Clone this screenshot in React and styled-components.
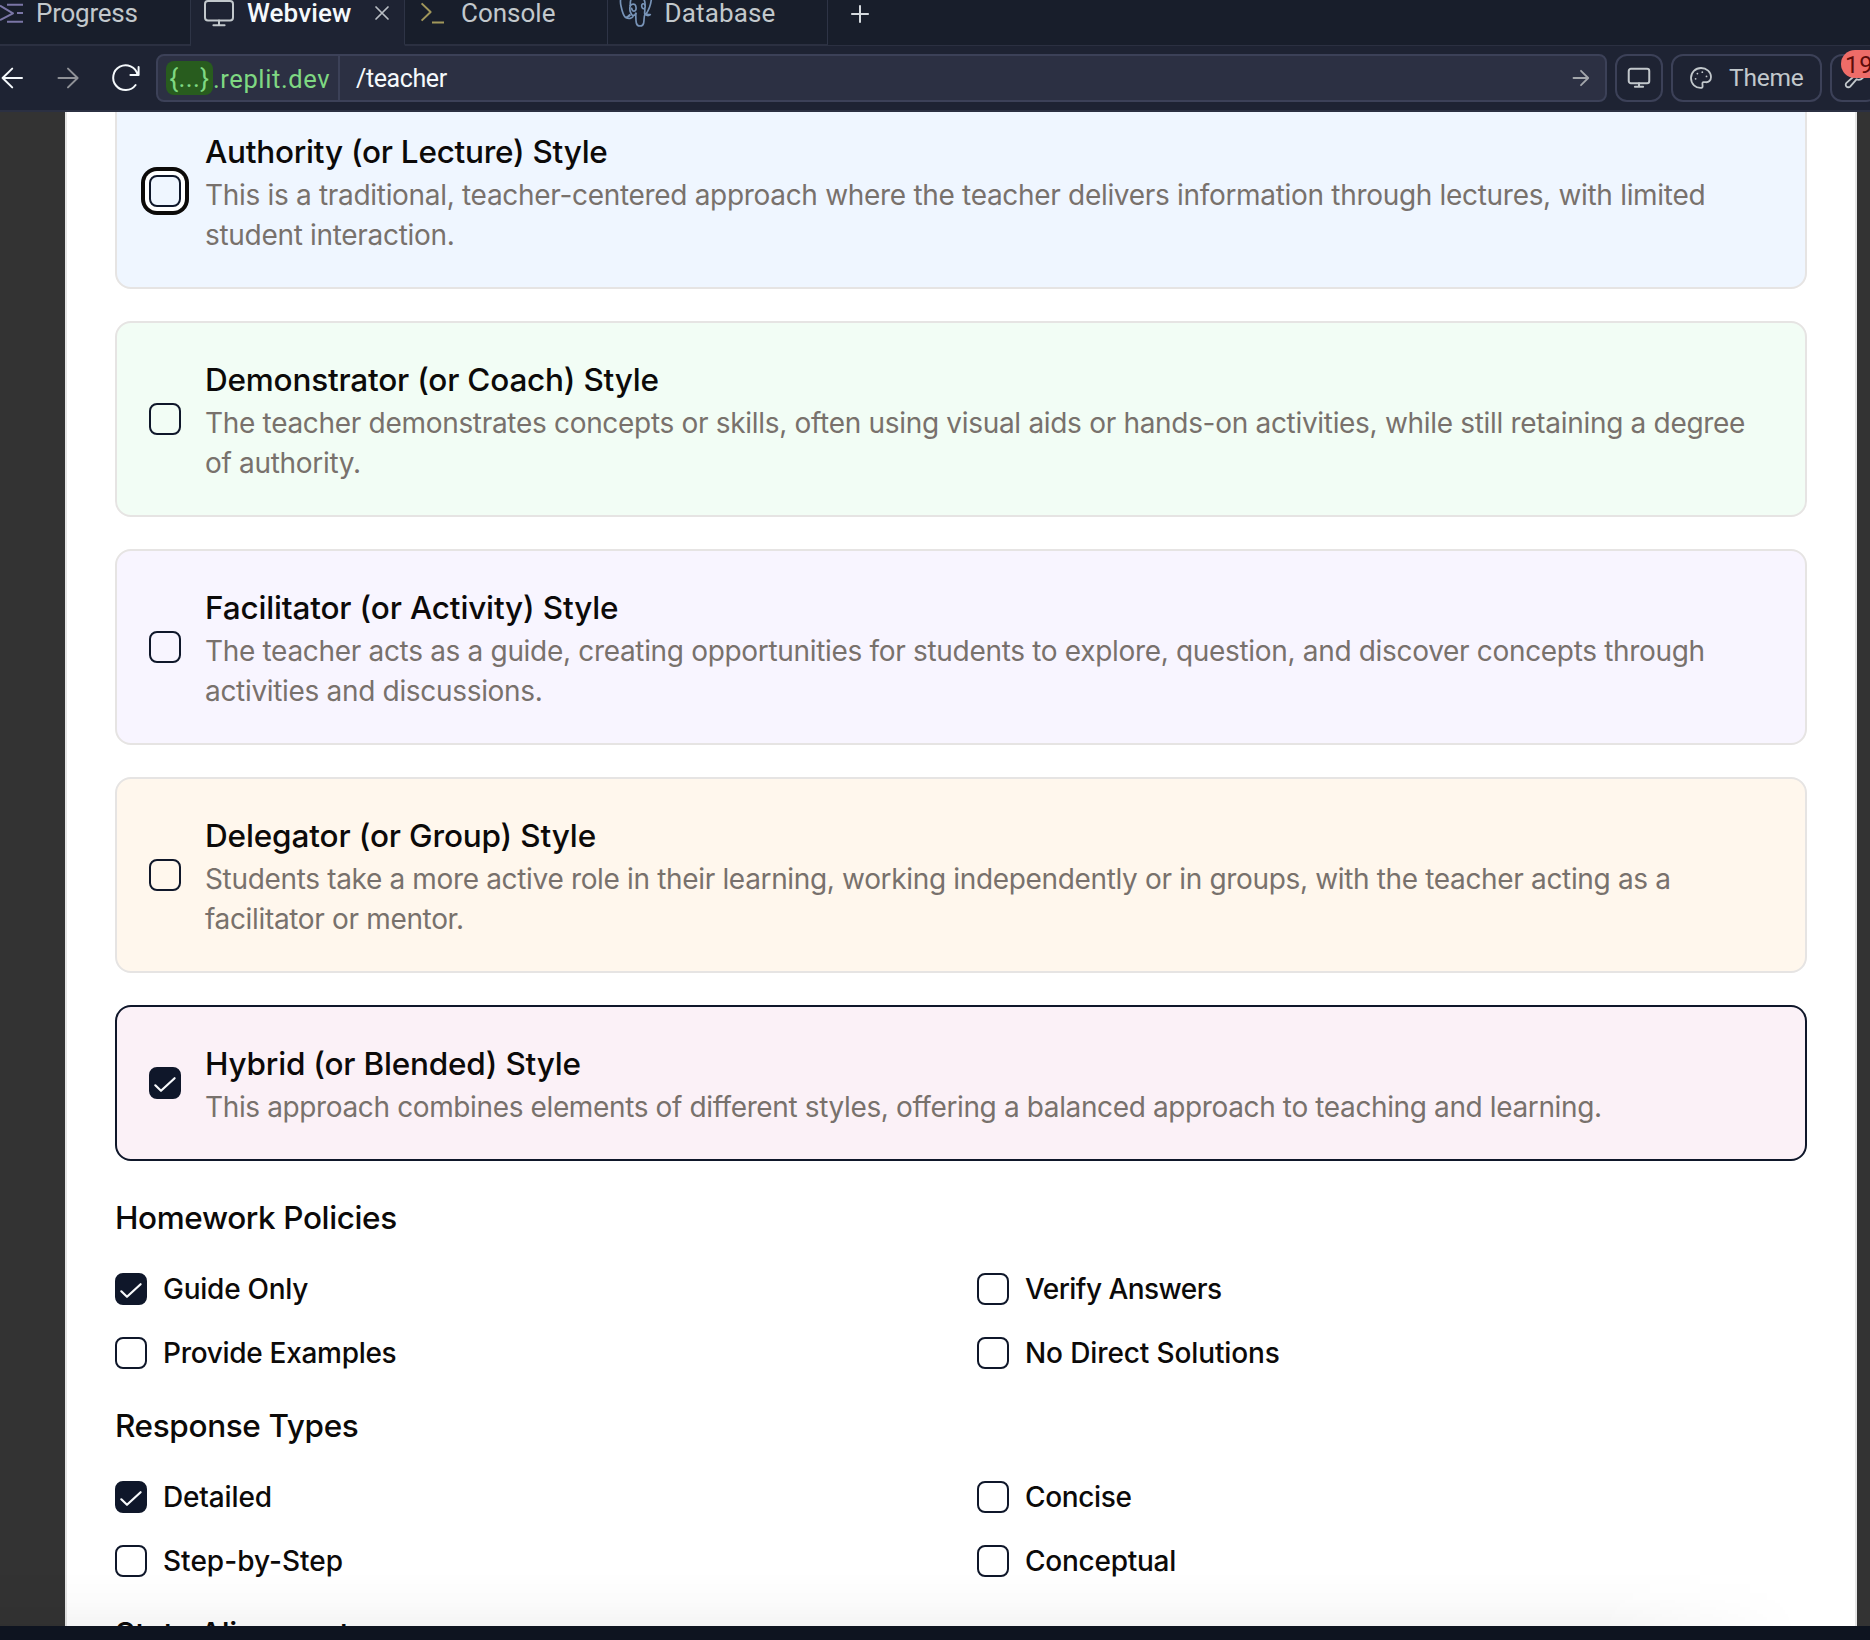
import React, { useState } from 'react';
import styled, { createGlobalStyle, css } from 'styled-components';

const GlobalStyle = createGlobalStyle`
  *, *::before, *::after { box-sizing: border-box; }
  html, body { margin: 0; padding: 0; }
  body { overflow: hidden; background: #0e1420; }
`;

const Screen = styled.div`
  display: flex;
  flex-direction: column;
  width: 1870px;
  height: 1640px;
  overflow: hidden;
  background: #0e1420;
  font-family: Roboto, 'Liberation Sans', sans-serif;
`;

const Icon = styled.svg`
  display: block;
  flex: none;
  overflow: visible;
  fill: none;
  stroke: currentColor;
  stroke-width: ${(p) => p.$weight || 2};
  stroke-linecap: ${(p) => (p.$square ? 'butt' : 'round')};
  stroke-linejoin: round;
`;

/* ---------- tab strip ---------- */

const TabStrip = styled.div`
  display: flex;
  flex: none;
  height: 46px;
  background: #181e2b;
`;

const Tab = styled.div`
  display: flex;
  align-items: center;
  flex: none;
  width: ${(p) => p.$width}px;
  height: 46px;
  padding: 0 0 18px ${(p) => p.$inset}px;
  gap: ${(p) => p.$gap}px;
  border-right: 1px solid #2e3446;
  border-bottom: 2px solid ${(p) => (p.$active ? '#1e2333' : '#2b3041')};
  background: ${(p) => (p.$active ? '#1e2333' : '#181e2b')};
`;

const TabLabel = styled.span`
  font-size: 26px;
  line-height: 26px;
  font-weight: ${(p) => (p.$active ? 500 : 400)};
  letter-spacing: ${(p) => p.$spacing || 0}px;
  color: ${(p) => (p.$active ? '#f5f9fc' : '#c2c8cc')};
  white-space: nowrap;
`;

const TabIcon = styled.span`
  display: flex;
  color: ${(p) => p.$color};
`;

const CloseSlot = styled.span`
  display: flex;
  margin-left: 10px;
  color: #b9bec4;
`;

const StripTail = styled.div`
  display: flex;
  align-items: center;
  flex: 1;
  height: 46px;
  padding: 0 0 18px 22px;
  border-bottom: 1px solid #2b3041;
  color: #d5dade;
`;

/* ---------- address bar ---------- */

const AddressRow = styled.div`
  display: flex;
  align-items: center;
  flex: none;
  gap: 8px;
  height: 66px;
  border-bottom: 2px solid #2b3042;
  background: #1e2333;
`;

const HistoryGroup = styled.div`
  display: flex;
  align-items: center;
  gap: 31px;
  margin-right: 7px;
`;

const NavButton = styled.span`
  display: flex;
  color: ${(p) => (p.$dim ? '#8f9197' : '#f5f9fc')};

  &:last-child {
    margin-left: -1px;
  }
`;

const AddressBox = styled.div`
  display: flex;
  align-items: center;
  flex: 1;
  height: 48px;
  padding-left: 8px;
  border: 2px solid #3c4158;
  border-radius: 8px;
  background: #2c3043;
`;

const HostChip = styled.span`
  display: flex;
  align-items: center;
  justify-content: center;
  width: 47px;
  height: 34px;
  border-radius: 8px;
  background: #285c1e;
  color: #7fd882;
  font-size: 26px;
  line-height: 34px;
  letter-spacing: 0.4px;
`;

const Host = styled.span`
  display: flex;
  align-items: center;
  width: 125px;
  height: 44px;
  padding-top: 1px;
  color: #7fd882;
  font-size: 25.5px;
  letter-spacing: 0.6px;
`;

const Path = styled.span`
  display: flex;
  align-items: center;
  flex: 1;
  height: 44px;
  padding: 1px 0 0 16px;
  border-left: 2px solid #3c4158;
  color: #f5f9fc;
  font-size: 25px;
  letter-spacing: -0.4px;
`;

const GoSlot = styled.span`
  display: flex;
  padding-right: 16px;
  color: #a3a6ab;
`;

const BarButton = styled.div`
  display: flex;
  align-items: center;
  flex: none;
  width: ${(p) => p.$width}px;
  height: 48px;
  padding-left: ${(p) => p.$inset}px;
  gap: 17px;
  border: 2px solid #3c4158;
  border-radius: 12px;
  color: #c2c8cc;
  font-size: 24.5px;
  letter-spacing: -0.2px;
  ${(p) =>
    p.$bleed &&
    css`
      position: relative;
      margin-right: -8px;
    `}
`;

const ThemeLabel = styled.span`
  line-height: 30px;
`;

const Badge = styled.span`
  position: absolute;
  top: -6px;
  left: 9px;
  display: flex;
  align-items: center;
  width: 42px;
  height: 28px;
  padding: 1px 0 0 4px;
  border-radius: 14px;
  background: #ee6c68;
  color: #5e0c0a;
  font-size: 24px;
  letter-spacing: 0.8px;
`;

/* ---------- page ---------- */

const Viewport = styled.div`
  position: relative;
  display: flex;
  flex: none;
  height: 1514px;
  overflow: hidden;
  background: #333333;
  font-family: Inter, 'Liberation Sans', sans-serif;
`;

const Panel = styled.main`
  flex: none;
  width: 1792px;
  height: 1700px;
  margin: -19px 0 0 65px;
  padding: 0 48px;
  border: 0 solid #e5e5e5;
  border-width: 0 2px;
  background: #ffffff;
`;

const Stack = styled.div`
  display: flex;
  flex-direction: column;
  gap: 32px;
`;

const StyleCard = styled.label`
  display: flex;
  align-items: center;
  gap: 24px;
  padding: 32px;
  border: 2px solid ${(p) => (p.$selected ? '#0f172a' : '#e6e4e3')};
  border-radius: 16px;
  background: ${(p) => p.$tint};
`;

const CardText = styled.div`
  flex: 1;
`;

const Title = styled.div`
  margin-bottom: -2px;
  font-size: 31.5px;
  line-height: 50px;
  font-weight: 500;
  letter-spacing: ${(p) => p.$spacing}px;
  color: #0c0a09;
`;

const Description = styled.div`
  font-size: 28px;
  line-height: 40px;
  letter-spacing: ${(p) => p.$spacing ?? -0.31}px;
  color: #78716c;
`;

const Box = styled.span`
  display: flex;
  flex: none;
  width: 32px;
  height: 32px;
  border: 2px solid #0f172a;
  border-radius: 8px;
  background: ${(p) => (p.$checked ? '#0f172a' : 'transparent')};
  color: #f8fafc;
  ${(p) =>
    p.$focused &&
    css`
      background: #eff6ff;
      box-shadow: 0 0 0 4px #ffffff, 0 0 0 8px #0c0a09;
    `}
`;

const Options = styled.div`
  display: grid;
  grid-template-columns: 1fr 1fr;
  gap: 32px;
`;

const Option = styled.label`
  display: flex;
  align-items: center;
  gap: 16px;
  height: 32px;
`;

const OptionLabel = styled.span`
  font-size: 28px;
  line-height: 28px;
  font-weight: 500;
  letter-spacing: ${(p) => p.$spacing}px;
  color: #0c0a09;
`;

const BottomShade = styled.div`
  position: absolute;
  left: 0;
  right: 0;
  bottom: 0;
  height: 56px;
  pointer-events: none;
  background: linear-gradient(to bottom, rgba(0, 0, 0, 0) 0%, rgba(0, 0, 0, 0.012) 50%, rgba(0, 0, 0, 0.045) 100%);
  mask-image: linear-gradient(to right, #000 0, #000 1600px, transparent 1800px);
`;

function Checkbox({ checked, focused }) {
  return (
    <Box $checked={checked} $focused={focused}>
      {checked && (
        <Icon width="28" height="28" viewBox="2 2 28 28" $weight={2.2}>
          <path d="M6.3 18.3 12 23.8 25.6 11.2" />
        </Icon>
      )}
    </Box>
  );
}

function Monitor({ width, height }) {
  return (
    <Icon width={width} height={height} viewBox="0 0 30 27" $weight={(2 * 30) / width}>
      <rect x="1" y="1" width="28" height="19.5" rx="3" />
      <path d="M15 20.5v4.8M9.4 25.3h11.2" />
    </Icon>
  );
}

function ProgressIcon() {
  return (
    <Icon width="24" height="26" viewBox="0 0 24 26" $square>
      <path d="M7 4.7h16M17 13h6M7 21.7h16M0 5.6 13 13.3 0 20" />
    </Icon>
  );
}

function ConsoleIcon() {
  return (
    <Icon width="24" height="26" viewBox="0 0 24 26" $square>
      <path d="M1.6 3.4 10.6 12 1.6 20.6M12 22.5h12" />
    </Icon>
  );
}

function PostgresIcon() {
  return (
    <Icon width="36" height="32" viewBox="24 -3 108 96" $weight={5}>
      <path d="M44-10C31-6 30 10 33 24c3 14 6 28 13 34 5 3 9-1 14-6" />
      <path d="M59 50c-4 5-6 8-11 9 8 5 18 2 21-3" />
      <path d="M61 22c-1-14 3-24 12-25h14c12 0 19 9 18 24" />
      <path d="M61 22c-3 10-2 20 5 29 5 3 10 0 12-5" />
      <path d="M61 23c4-6 14-6 16 0 2 7 1 14-3 16-5 1-8-2-9-8" />
      <path d="M100-9c18-3 26 3 24 14-2 16-8 32-16 43" />
      <path d="M105 21c-4-6-10-4-10 2 0 6 3 10 7 9 4-2 4-7 3-11Z" />
      <path d="M104 32c2 5-1 9 0 15 5 7 12 7 17 3-6 0-9-1-13-3" />
      <path d="M77 46c1 10 0 20 2 29 2 12 20 12 22 0 2-9 0-19 4-27" />
    </Icon>
  );
}

const STYLES = [
  {
    title: 'Authority (or Lecture) Style',
    text: 'This is a traditional, teacher-centered approach where the teacher delivers information through lectures, with limited student interaction.',
    tint: '#eff6ff',
    spacing: -0.25,
    focused: true,
  },
  {
    title: 'Demonstrator (or Coach) Style',
    text: 'The teacher demonstrates concepts or skills, often using visual aids or hands-on activities, while still retaining a degree of authority.',
    tint: '#f2fdf5',
    spacing: -0.2,
  },
  {
    title: 'Facilitator (or Activity) Style',
    text: 'The teacher acts as a guide, creating opportunities for students to explore, question, and discover concepts through activities and discussions.',
    tint: '#f8f5ff',
    spacing: -0.16,
    textSpacing: -0.32,
  },
  {
    title: 'Delegator (or Group) Style',
    text: 'Students take a more active role in their learning, working independently or in groups, with the teacher acting as a facilitator or mentor.',
    tint: '#fff7ed',
    spacing: -0.14,
    textSpacing: -0.34,
  },
  {
    title: 'Hybrid (or Blended) Style',
    text: 'This approach combines elements of different styles, offering a balanced approach to teaching and learning.',
    tint: '#fbf1f7',
    spacing: -0.2,
    textSpacing: -0.373,
    selected: true,
  },
];

const GROUPS = [
  {
    title: 'Homework Policies',
    spacing: -0.38,
    options: [
      { label: 'Guide Only', spacing: -0.25, on: true },
      { label: 'Verify Answers', spacing: -0.54 },
      { label: 'Provide Examples', spacing: -0.3 },
      { label: 'No Direct Solutions', spacing: -0.12 },
    ],
  },
  {
    title: 'Response Types',
    spacing: -0.36,
    options: [
      { label: 'Detailed', spacing: -0.15, on: true },
      { label: 'Concise', spacing: -0.35 },
      { label: 'Step-by-Step', spacing: 0.02 },
      { label: 'Conceptual', spacing: -0.25 },
    ],
  },
];

function OptionGroup({ group }) {
  const [on, setOn] = useState(() => group.options.map((o) => !!o.on));
  const toggle = (i) => setOn((v) => v.map((x, j) => (j === i ? !x : x)));
  return (
    <>
      <Title $spacing={group.spacing}>{group.title}</Title>
      <Options>
        {group.options.map((o, i) => (
          <Option key={o.label} onClick={() => toggle(i)}>
            <Checkbox checked={on[i]} />
            <OptionLabel $spacing={o.spacing}>{o.label}</OptionLabel>
          </Option>
        ))}
      </Options>
    </>
  );
}

export default function App() {
  return (
    <Screen>
      <GlobalStyle />
      <TabStrip>
        <Tab $width={191} $inset={0} $gap={12}>
          <TabIcon $color="#7a76a6"><ProgressIcon /></TabIcon>
          <TabLabel $spacing={-0.24}>Progress</TabLabel>
        </Tab>
        <Tab $active $width={214} $inset={13} $gap={13}>
          <TabIcon $color="#c2c8cc"><Monitor width={30} height={27} /></TabIcon>
          <TabLabel $active $spacing={0.1}>Webview</TabLabel>
          <CloseSlot>
            <Icon width="16" height="16" viewBox="0 0 16 16" $weight={1.7}>
              <path d="M2 2 14 14M14 2 2 14" />
            </Icon>
          </CloseSlot>
        </Tab>
        <Tab $width={203} $inset={15} $gap={17}>
          <TabIcon $color="#a1975b"><ConsoleIcon /></TabIcon>
          <TabLabel>Console</TabLabel>
        </Tab>
        <Tab $width={220} $inset={10} $gap={10.5}>
          <TabIcon $color="#7894b8"><PostgresIcon /></TabIcon>
          <TabLabel $spacing={0.14}>Database</TabLabel>
        </Tab>
        <StripTail>
          <Icon width="20" height="20" viewBox="0 0 20 20" $square>
            <path d="M10 1.2v17.6M1.2 10h17.6" />
          </Icon>
        </StripTail>
      </TabStrip>

      <AddressRow>
        <HistoryGroup>
          <NavButton>
            <Icon width="24" height="24" viewBox="0 0 24 24">
              <path d="M22 12H2.6M12.2 2.6 2.6 12l9.6 9.4" />
            </Icon>
          </NavButton>
          <NavButton $dim>
            <Icon width="24" height="24" viewBox="0 0 24 24">
              <path d="M3.5 12h19M13 2.6 22.6 12 13 21.4" />
            </Icon>
          </NavButton>
          <NavButton>
            <Icon width="32" height="28" viewBox="0 0 32 28">
              <path d="M29.6 3v8h-8.2M28.6 10.6A12.4 12.4 0 1 0 26.6 21" />
            </Icon>
          </NavButton>
        </HistoryGroup>
        <AddressBox>
          <HostChip>{'{...}'}</HostChip>
          <Host>.replit.dev</Host>
          <Path>/teacher</Path>
          <GoSlot>
            <Icon width="17" height="18" viewBox="0 0 17 18" $weight={1.8}>
              <path d="M1.5 9h14.6M9 1.8 16.2 9 9 16.2" />
            </Icon>
          </GoSlot>
        </AddressBox>
        <BarButton $width={48} $inset={11}>
          <Monitor width={22} height={20} />
        </BarButton>
        <BarButton $width={151} $inset={17}>
          <Icon width="22" height="22" viewBox="0 0 22 22" $weight={1.8}>
            <path d="M11.6 20.8C5.4 21.4 1 16.8 1 11 1 5.4 5.4 1 11 1s10 4 10 9c0 3.4-2.4 5.6-5.4 5.2-2-.2-3.2-.2-3.2 1.4 0 1.4 1 3.6-.8 4.2Z" />
            <path d="M5.6 11.8h.02M7.4 6.6h.02M12.3 5.2h.02M16.5 9.4h.02" />
          </Icon>
          <ThemeLabel>Theme</ThemeLabel>
        </BarButton>
        <BarButton $bleed $width={48} $inset={12}>
          <Icon width="22" height="22" viewBox="0 0 24 24" $weight={2}>
            <path d="M14.7 6.3a1 1 0 0 0 0 1.4l1.6 1.6a1 1 0 0 0 1.4 0l3.8-3.8a6 6 0 0 1-7.9 7.9l-6.9 7.9a2.1 2.1 0 0 1-4-4l7.9-6.9a6 6 0 0 1 7.9-7.9z" />
          </Icon>
          <Badge>19</Badge>
        </BarButton>
      </AddressRow>

      <Viewport>
        <Panel>
          <Stack>
            {STYLES.map((s) => (
              <StyleCard key={s.title} $tint={s.tint} $selected={s.selected}>
                <Checkbox checked={s.selected} focused={s.focused} />
                <CardText>
                  <Title $spacing={s.spacing}>{s.title}</Title>
                  <Description $spacing={s.textSpacing}>{s.text}</Description>
                </CardText>
              </StyleCard>
            ))}
            {GROUPS.map((g) => (
              <OptionGroup key={g.title} group={g} />
            ))}
            <Title $spacing={-0.3}>State Alignment</Title>
          </Stack>
        </Panel>
        <BottomShade />
      </Viewport>
    </Screen>
  );
}
